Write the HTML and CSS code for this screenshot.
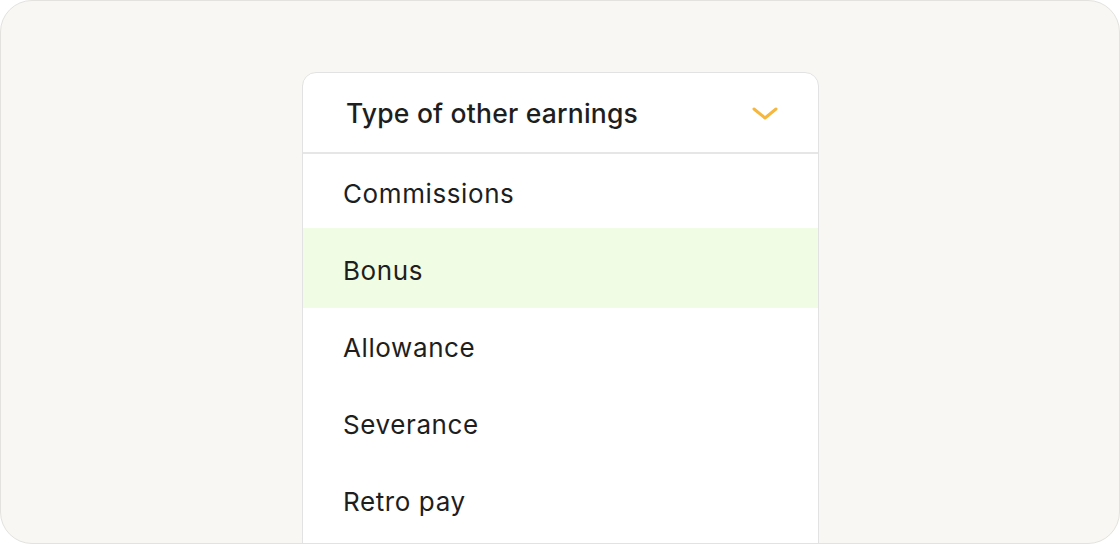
FILE: index.html
```html
<!DOCTYPE html>
<html lang="en">
<head>
<meta charset="utf-8">
<link rel="stylesheet" href="styles.css">
</head>
<body>
<div class="frame">
  <div class="card">
    <div class="header">
      <span class="title">Type of other earnings</span>
      <svg class="chev" width="26" height="16" viewBox="0 0 26 16" aria-hidden="true">
        <path d="M2 3 L13 12 L24 3" fill="none" stroke="#f5b73e" stroke-width="3" stroke-linecap="round" stroke-linejoin="round"/>
      </svg>
    </div>
    <ul class="list">
      <li class="item first">Commissions</li>
      <li class="item active">Bonus</li>
      <li class="item">Allowance</li>
      <li class="item">Severance</li>
      <li class="item">Retro pay</li>
    </ul>
  </div>
</div>
</body>
</html>
```
FILE: styles.css
```css
html, body {
  margin: 0;
  padding: 0;
  background: #ffffff;
}
body {
  width: 1120px;
  height: 544px;
  overflow: hidden;
  font-family: Inter, "Noto Sans", sans-serif;
  color: #1e1e1e;
}
.frame {
  box-sizing: border-box;
  width: 1120px;
  height: 544px;
  background: #f8f7f4;
  border: 1px solid #e4e2de;
  border-radius: 32px;
  overflow: hidden;
  display: flex;
  justify-content: center;
  padding-top: 71px;
}
.card {
  box-sizing: border-box;
  width: 517px;
  height: 520px;
  background: #ffffff;
  border: 1.5px solid #e2e2e2;
  border-radius: 14px;
  flex-shrink: 0;
  margin-left: 1px;
  overflow: hidden;
}
.header {
  box-sizing: border-box;
  height: 81px;
  border-bottom: 2px solid #e6e6e6;
  display: flex;
  align-items: center;
  justify-content: space-between;
  padding: 0 40px 0 43px;
}
.title {
  font-size: 26.5px;
  font-weight: 500;
  letter-spacing: 0.2px;
  margin-top: 1px;
}
.chev {
  display: block;
  margin-top: 2px;
}
.list {
  list-style: none;
  margin: 0;
  padding: 0;
}
.item {
  box-sizing: border-box;
  height: 77px;
  display: flex;
  align-items: center;
  padding-left: 40px;
  padding-top: 2px;
  font-size: 26px;
  font-weight: 400;
  letter-spacing: 0.6px;
}
.item.first {
  height: 74px;
  padding-top: 4px;
}
.item.active {
  height: 80px;
  background: #f1fce4;
  padding-top: 4px;
}
```
